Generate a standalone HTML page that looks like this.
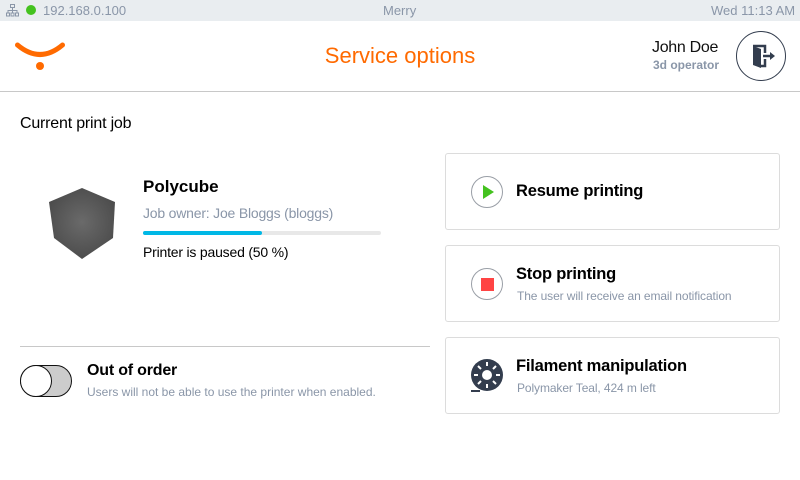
<!DOCTYPE html>
<html><head><style>
*{margin:0;padding:0;box-sizing:border-box}
body{width:800px;height:480px;background:#fff;font-family:"Liberation Sans",sans-serif;position:relative;overflow:hidden;color:#000}
.a{position:absolute;white-space:nowrap}
.card{position:absolute;left:445px;width:335px;height:77px;border:1px solid #dcdcdc;border-radius:3px}
.ct{position:absolute;left:70px;font-size:16.5px;font-weight:bold;letter-spacing:-0.2px}
.cs{position:absolute;left:71px;font-size:12px;color:#8a96a8;letter-spacing:-0.1px}
.ic{position:absolute;left:25px;width:32px;height:32px;border:1px solid #999ea6;border-radius:50%}
</style></head><body>
<div class="a" style="left:0;top:0;width:800px;height:21px;background:#e9edf0"></div>
<svg class="a" style="left:6px;top:4px" width="13" height="13" viewBox="0 0 13 13" fill="none" stroke="#8a96a8" stroke-width="1"><rect x="4.5" y="0.5" width="4" height="3"/><rect x="0.5" y="9" width="3" height="3"/><rect x="5" y="9" width="3" height="3"/><rect x="9.5" y="9" width="3" height="3"/><path d="M6.5 3.5V9M2 9V6.5H11V9"/></svg>
<div class="a" style="left:26px;top:5px;width:10px;height:10px;border-radius:50%;background:#44c21f"></div>
<div class="a" style="left:43px;top:3px;font-size:13px;color:#8a96a8">192.168.0.100</div>
<div class="a" style="left:383px;top:3px;font-size:13px;color:#8a96a8">Merry</div>
<div class="a" style="left:711px;top:3px;font-size:13px;color:#8a96a8">Wed 11:13 AM</div>
<svg class="a" style="left:14px;top:40px" width="52" height="32" viewBox="0 0 52 32"><path d="M3.5 5Q26 24 48.5 5" stroke="#ff6a00" stroke-width="5" fill="none" stroke-linecap="round"/><circle cx="26" cy="26" r="4" fill="#ff6a00"/></svg>
<div class="a" style="left:0;width:800px;top:43px;text-align:center;font-size:22px;color:#ff6a00">Service options</div>
<div class="a" style="left:652px;top:39px;font-size:16px;color:#111;letter-spacing:-0.3px">John Doe</div>
<div class="a" style="left:653px;top:58px;font-size:12px;font-weight:bold;color:#8a96a8">3d operator</div>
<div class="a" style="left:736px;top:31px;width:50px;height:50px;border:1.5px solid #333d4e;border-radius:50%"></div>
<svg class="a" style="left:750px;top:43px" width="26" height="26" viewBox="0 0 26 26"><path d="M3 3H15V10M15 16V23H9" fill="none" stroke="#333d4e" stroke-width="2.5"/><path d="M3 3L11 6V25L3 22Z" fill="#333d4e"/><path d="M13 13H21" stroke="#333d4e" stroke-width="2.5"/><path d="M20 9L25 13L20 17Z" fill="#333d4e"/></svg>
<div class="a" style="left:0;top:91px;width:800px;height:1px;background:#c8c8c8"></div>
<div class="a" style="left:20px;top:115px;font-size:16px;letter-spacing:-0.2px">Current print job</div>
<svg class="a" style="left:46px;top:186px" width="72" height="75" viewBox="46 186 72 75"><defs><radialGradient id="g" cx="82" cy="222" r="40" gradientUnits="userSpaceOnUse"><stop offset="0" stop-color="#6a6a6a"/><stop offset="1" stop-color="#4a4a4a"/></radialGradient></defs><path d="M49 202L82 188L115 202L113 238L82 259L54 238Z" fill="url(#g)"/></svg>
<div class="a" style="left:143px;top:177px;font-size:17px;font-weight:bold">Polycube</div>
<div class="a" style="left:143px;top:205px;font-size:14px;color:#8a96a8;letter-spacing:-0.2px">Job owner: Joe Bloggs (bloggs)</div>
<div class="a" style="left:143px;top:231px;width:238px;height:4px;background:#e8e8e8;border-radius:2px"></div>
<div class="a" style="left:143px;top:231px;width:119px;height:4px;background:#00b8e6;border-radius:2px"></div>
<div class="a" style="left:143px;top:244px;font-size:14px;letter-spacing:-0.2px">Printer is paused (50 %)</div>
<div class="a" style="left:20px;top:346px;width:410px;height:1px;background:#c8c8c8"></div>
<div class="a" style="left:20px;top:365px;width:52px;height:32px;border:1.5px solid #111;border-radius:16px;background:#ccc"></div>
<div class="a" style="left:20px;top:365px;width:32px;height:32px;border:1.5px solid #111;border-radius:50%;background:#fff"></div>
<div class="a" style="left:87px;top:362px;font-size:16px;font-weight:bold;letter-spacing:-0.2px">Out of order</div>
<div class="a" style="left:87px;top:385px;font-size:12px;color:#8a96a8">Users will not be able to use the printer when enabled.</div>
<div class="card" style="top:153px"><div class="ic" style="top:22px"><svg width="30" height="30" viewBox="0 0 30 30"><path d="M11 8L22 15L11 22Z" fill="#44c21f"/></svg></div><div class="ct" style="top:28px">Resume printing</div></div>
<div class="card" style="top:245px"><div class="ic" style="top:22px"><div style="position:absolute;left:9px;top:9px;width:13px;height:13px;background:#f44"></div></div><div class="ct" style="top:19px">Stop printing</div><div class="cs" style="top:43px">The user will receive an email notification</div></div>
<div class="card" style="top:337px"><svg class="a" style="left:24px;top:20px" width="34" height="36" viewBox="0 0 34 36"><circle cx="17" cy="17" r="16" fill="#333d4e"/><circle cx="17" cy="17" r="5" fill="#fff"/><g stroke="#fff" stroke-width="2"><path d="M17 4V8M17 26V30M4 17H8M26 17H30M8 8L11 11M23 23L26 26M26 8L23 11M8 26L11 23"/></g><path d="M1 33H10" stroke="#333d4e" stroke-width="2"/></svg><div class="ct" style="top:19px">Filament manipulation</div><div class="cs" style="top:43px">Polymaker Teal, 424 m left</div></div>
</body></html>
